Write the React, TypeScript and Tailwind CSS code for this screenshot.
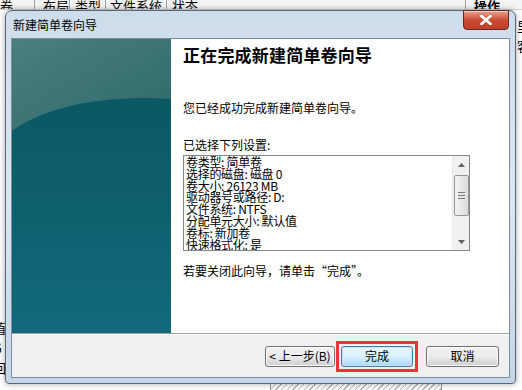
import React from 'react';

const cjk = { fontFamily: '"Noto Sans CJK SC", "Noto Sans", sans-serif' };

const settings = [
  '卷类型: 简单卷',
  '选择的磁盘: 磁盘 0',
  '卷大小: 26123 MB',
  '驱动器号或路径: D:',
  '文件系统: NTFS',
  '分配单元大小: 默认值',
  '卷标: 新加卷',
  '快速格式化: 是',
];

function TealPanel() {
  return (
    <div className="relative w-[159px] h-full bg-gradient-to-b from-[#0a5560] via-[#0d5d6b] to-[#136a7c] overflow-hidden">
      <svg className="absolute inset-0" width="159" height="295" viewBox="0 0 159 295">
        <defs>
          <linearGradient id="hl" x1="0" y1="0" x2="1" y2="1">
            <stop offset="0" stopColor="#4a7f7c" />
            <stop offset="1" stopColor="#2d6a6c" />
          </linearGradient>
        </defs>
        <path d="M0 0 H159 V60 C110 56 40 62 0 92 Z" fill="url(#hl)" />
      </svg>
    </div>
  );
}

function WinButton({ label, focused }: { label: string; focused?: boolean }) {
  return (
    <div
      className={
        'h-[21px] flex items-center justify-center rounded-[3px] border text-[12px] text-black ' +
        (focused
          ? 'border-[#3c7fb1] bg-gradient-to-b from-[#eaf6fd] via-[#d9f0fc] to-[#a7d9f5] shadow-[inset_0_0_0_1px_#c4e5f6]'
          : 'border-[#707070] bg-gradient-to-b from-[#f2f2f2] via-[#ebebeb] to-[#cfcfcf] shadow-[inset_0_0_0_1px_#fcfcfc]')
      }
      style={cjk}
    >
      {label}
    </div>
  );
}

export default function App() {
  return (
    <div className="relative w-[522px] h-[390px] overflow-hidden bg-white" style={cjk}>
      {/* background: disk management list */}
      <div className="h-[10px] flex items-end overflow-hidden bg-[#f4f4f4] border-b border-[#d5d5d5] text-[13px] leading-[14px] text-black">
        <div className="w-[35px] pl-0 border-r border-[#a0a0a0] -mb-[4px]">卷</div>
        <div className="w-[35px] pl-[8px] border-r border-[#a0a0a0] -mb-[4px]">布局</div>
        <div className="w-[36px] pl-[5px] border-r border-[#a0a0a0] -mb-[4px]">类型</div>
        <div className="w-[61px] pl-[4px] border-r border-[#a0a0a0] -mb-[4px]">文件系统</div>
        <div className="flex-1 pl-[5px] border-r border-[#a0a0a0] -mb-[4px]">状态</div>
        <div className="w-[56px] pl-[8px] font-bold -mb-[4px]">操作</div>
      </div>
      <div className="absolute right-[-8px] top-[16px] text-[13px] leading-[20px] text-black">
        <div>里</div>
        <div>客</div>
      </div>
      <div className="absolute left-[-7px] top-[318px] text-[13px] leading-[20px] text-black">
        <div>值</div>
        <div>G</div>
        <div>回</div>
      </div>
      <div className="absolute left-[270px] top-[384px] w-[172px] h-[6px] border-x border-[#9a9a9a] bg-[repeating-linear-gradient(135deg,#ffffff_0px,#ffffff_3px,#b8b8b8_3px,#b8b8b8_4px)]" />

      {/* wizard window */}
      <div className="absolute left-[5px] top-[10px] w-[511px] h-[374px] rounded-t-[7px] rounded-b-[4px] border border-[#55677a] bg-gradient-to-b from-[#cfdceb] via-[#dbe6f1] to-[#c6d6e8] shadow-[0_0_6px_rgba(0,0,0,0.35)] flex flex-col px-[5px] pb-[5px]">
        <div className="h-[27px] flex items-center relative shrink-0">
          <span className="pl-[2px] text-[12px] text-black">新建简单卷向导</span>
          <div className="absolute right-[1px] top-[-1px] w-[46px] h-[20px] rounded-b-[4px] border border-[#5d2a25] bg-gradient-to-b from-[#e8a290] via-[#cc4b33] to-[#c23d26] flex items-center justify-center shadow-[inset_0_1px_0_rgba(255,255,255,0.5)]">
            <svg width="12" height="10" viewBox="0 0 12 10">
              <path d="M1.5 1 L10.5 9 M10.5 1 L1.5 9" stroke="#ffffff" strokeWidth="2.6" strokeLinecap="square" />
            </svg>
          </div>
        </div>

        <div className="flex-1 flex flex-col border border-[#7d8ea0] bg-[#f0f0f0]">
          <div className="h-[295px] flex border-b border-[#a0a0a0]">
            <TealPanel />
            <div className="flex-1 bg-white pl-[12px] pt-[5px] text-[12px] text-black">
              <div className="text-[17px] font-bold leading-[22px] tracking-[0.2px]">正在完成新建简单卷向导</div>
              <div className="mt-[34px] leading-[16px]">您已经成功完成新建简单卷向导。</div>
              <div className="mt-[21px] leading-[16px]">已选择下列设置:</div>
              <div className="mt-[2px] w-[287px] h-[96px] border border-[#828790] flex">
                <div className="flex-1 overflow-hidden pl-[2px] text-[12px] leading-[11.8px] tracking-[-0.3px]">
                  {settings.map((s) => (
                    <div key={s} className="whitespace-nowrap">{s}</div>
                  ))}
                </div>
                <div className="w-[17px] bg-[#f0f0f0] flex flex-col items-center border-l border-[#e8e8e8]">
                  <div className="h-[17px] flex items-center justify-center">
                    <svg width="7" height="4" viewBox="0 0 7 4"><path d="M0 4 L3.5 0 L7 4 Z" fill="#606060" /></svg>
                  </div>
                  <div className="mt-[2px] w-[15px] h-[41px] rounded-[2px] border border-[#959595] bg-gradient-to-r from-[#f2f2f2] to-[#dcdcdc] flex flex-col items-center justify-center gap-[2px]">
                    <div className="w-[7px] h-px bg-[#777]" />
                    <div className="w-[7px] h-px bg-[#777]" />
                    <div className="w-[7px] h-px bg-[#777]" />
                  </div>
                  <div className="flex-1" />
                  <div className="h-[17px] flex items-center justify-center">
                    <svg width="7" height="4" viewBox="0 0 7 4"><path d="M0 0 L3.5 4 L7 0 Z" fill="#606060" /></svg>
                  </div>
                </div>
              </div>
              <div className="mt-[12px] leading-[16px]">若要关闭此向导，请单击“完成”。</div>
            </div>
          </div>
          <div className="flex-1 flex items-center justify-end pr-[10px] border-t border-white">
            <div className="w-[70px]"><WinButton label="< 上一步(B)" /></div>
            <div className="ml-[1px] p-[2px] border-[3px] border-[#e8343a]">
              <div className="w-[72px]"><WinButton label="完成" focused /></div>
            </div>
            <div className="ml-[8px] w-[73px]"><WinButton label="取消" /></div>
          </div>
        </div>
      </div>
    </div>
  );
}
